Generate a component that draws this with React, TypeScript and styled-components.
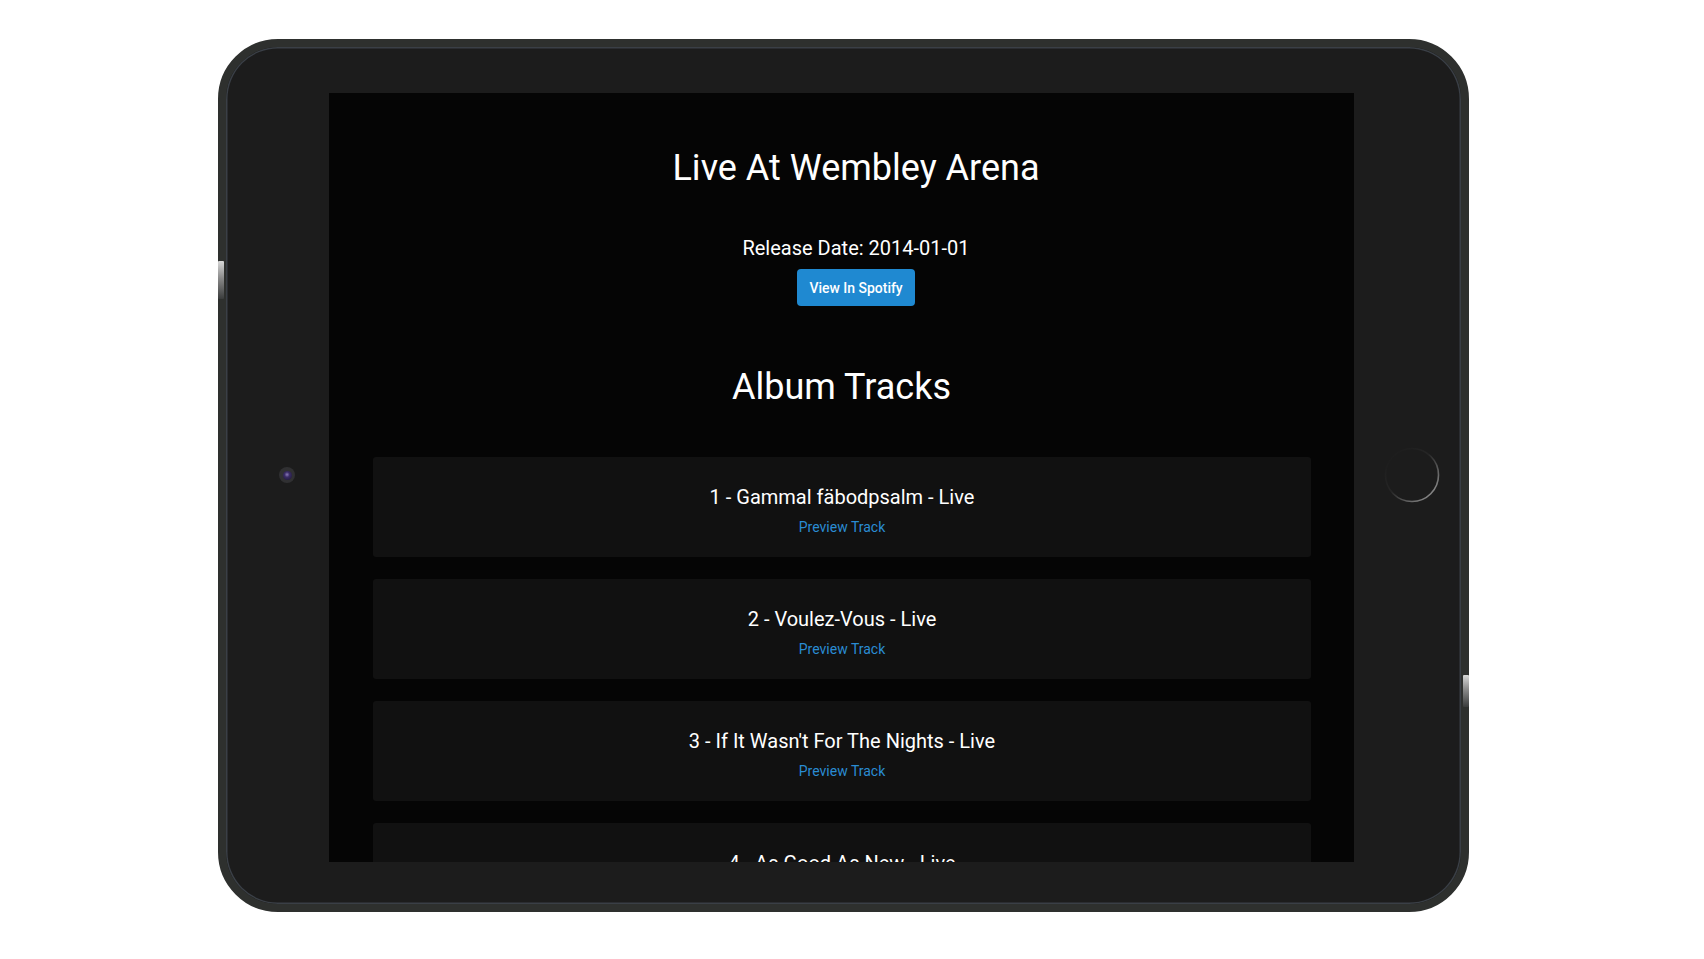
import styled, { createGlobalStyle } from 'styled-components';

const GlobalStyle = createGlobalStyle`
  html, body {
    margin: 0;
    padding: 0;
    background: #ffffff;
  }
  body {
    font-family: Roboto, "Liberation Sans", Arial, sans-serif;
  }
`;

const Page = styled.div`
  display: flex;
  align-items: flex-start;
  padding: 39px 0 0 218px;
  min-height: 959px;
  box-sizing: border-box;
`;

const Device = styled.div`
  position: relative;
  display: flex;
  align-items: stretch;
  padding: 46px 0 42px;
  background: #1c1c1c;
  border: 8px solid #2e302e;
  border-radius: 60px;
  box-shadow: inset 0 0 0 1.5px #3a3f46;
`;

const SideButton = styled.div<{ $side: 'left' | 'right'; $top: number; $height: number }>`
  position: absolute;
  ${(p) => (p.$side === 'left' ? 'left: -8px;' : 'right: -8px;')}
  top: ${(p) => p.$top}px;
  width: 6px;
  height: ${(p) => p.$height}px;
  background: linear-gradient(180deg, #d8d8d8 0%, #8a8a8a 45%, #3a3c3c 100%);
  border-radius: 1px;
`;

const Bezel = styled.div<{ $width: number; $align: 'flex-start' | 'flex-end'; $inset: number }>`
  width: ${(p) => p.$width}px;
  display: flex;
  align-items: center;
  justify-content: ${(p) => p.$align};
  ${(p) => (p.$align === 'flex-start' ? `padding-left: ${p.$inset}px;` : `padding-right: ${p.$inset}px;`)}
  padding-bottom: 5px;
  box-sizing: border-box;
`;

const Camera = styled.div`
  width: 16px;
  height: 16px;
  border-radius: 50%;
  background: #303032;
  display: flex;
  align-items: center;
  justify-content: center;
`;

const Lens = styled.div`
  width: 9px;
  height: 9px;
  border-radius: 50%;
  background: radial-gradient(circle at 45% 40%, #8a7ab8 0%, #3a2c66 35%, #1a1430 100%);
`;

const Screen = styled.div`
  width: 1025px;
  height: 769px;
  background: #050505;
  overflow: hidden;
  display: flex;
  flex-direction: column;
  color: #ffffff;
`;

const Header = styled.header`
  display: flex;
  flex-direction: column;
  align-items: center;
  padding: 54px 0 0 29px;
`;

const AlbumTitle = styled.h1`
  margin: 0;
  font-size: 36px;
  line-height: 42px;
  font-weight: 400;
`;

const ReleaseDate = styled.p`
  margin: 47px 0 0;
  font-size: 20px;
  line-height: 24px;
`;

const SpotifyButton = styled.a`
  margin-top: 9px;
  width: 118px;
  height: 37px;
  display: flex;
  align-items: center;
  justify-content: center;
  background: #1f89d1;
  color: #ffffff;
  border-radius: 4px;
  font-size: 15px;
  font-weight: 500;
  text-decoration: none;
  white-space: nowrap;
  cursor: pointer;
`;

const Condensed = styled.span<{ $scale: number }>`
  display: inline-block;
  white-space: nowrap;
  transform: scaleX(${(p) => p.$scale});
`;

const SectionTitle = styled.h2`
  margin: 60px 0 0;
  text-align: center;
  font-size: 36px;
  line-height: 42px;
  font-weight: 400;
`;

const TrackList = styled.ul`
  list-style: none;
  margin: 49px 0 0;
  padding: 0 43px 0 44px;
  display: flex;
  flex-direction: column;
  gap: 22px;
`;

const TrackCard = styled.li`
  background: #111111;
  border-radius: 3px;
  padding: 28px 20px 21px;
  display: flex;
  flex-direction: column;
  align-items: center;
  flex-shrink: 0;
`;

const TrackName = styled.div`
  font-size: 20px;
  line-height: 24px;
`;

const PreviewLink = styled.a`
  margin-top: 9px;
  font-size: 14px;
  line-height: 18px;
  color: #2a8cd3;
  text-decoration: none;
  cursor: pointer;
`;

const HomeButton = () => (
  <svg width="56" height="56" viewBox="0 0 56 56">
    <defs>
      <linearGradient id="homeRing" x1="0.1" y1="0.1" x2="0.9" y2="0.9">
        <stop offset="0" stopColor="#1c1c1c" />
        <stop offset="0.45" stopColor="#262626" />
        <stop offset="1" stopColor="#8e8e8e" />
      </linearGradient>
    </defs>
    <circle cx="28" cy="28" r="26.5" fill="none" stroke="url(#homeRing)" strokeWidth="1.6" />
  </svg>
);

const tracks = [
  'Gammal fäbodpsalm - Live',
  'Voulez-Vous - Live',
  "If It Wasn't For The Nights - Live",
  'As Good As New - Live',
  'Knowing Me, Knowing You - Live',
  'Rock Me - Live',
];

export default function App() {
  return (
    <>
      <GlobalStyle />
      <Page>
        <Device>
          <SideButton $side="left" $top={214} $height={38} />
          <SideButton $side="right" $top={628} $height={32} />
          <Bezel $width={103} $align="flex-start" $inset={53}>
            <Camera>
              <Lens />
            </Camera>
          </Bezel>
          <Screen>
            <Header>
              <AlbumTitle>Live At Wembley Arena</AlbumTitle>
              <ReleaseDate>Release Date: 2014-01-01</ReleaseDate>
              <SpotifyButton>
                <Condensed $scale={0.93}>View In Spotify</Condensed>
              </SpotifyButton>
            </Header>
            <SectionTitle>Album Tracks</SectionTitle>
            <TrackList>
              {tracks.map((name, i) => (
                <TrackCard key={name}>
                  <TrackName>
                    {i + 1} - {name}
                  </TrackName>
                  <PreviewLink>Preview Track</PreviewLink>
                </TrackCard>
              ))}
            </TrackList>
          </Screen>
          <Bezel $width={107} $align="flex-end" $inset={21}>
            <HomeButton />
          </Bezel>
        </Device>
      </Page>
    </>
  );
}
